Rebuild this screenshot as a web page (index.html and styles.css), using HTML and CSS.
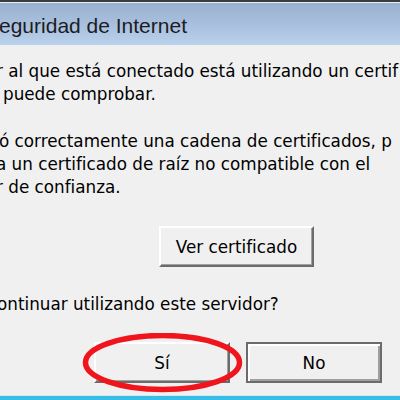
FILE: index.html
```html
<!DOCTYPE html>
<html lang="es">
<head>
<meta charset="utf-8">
<title>Seguridad de Internet</title>
<link rel="stylesheet" href="styles.css">
</head>
<body>
<div class="dialog">
  <div class="titlebar"><span class="title">eguridad de Internet</span></div>
  <div class="content">
    <div class="para">
      <div class="line l1">r al que está conectado está utilizando un certif</div>
      <div class="line l2">puede comprobar.</div>
    </div>
    <div class="para">
      <div class="line l3">ó correctamente una cadena de certificados, p</div>
      <div class="line l4">a un certificado de raíz no compatible con el</div>
      <div class="line l5">r de confianza.</div>
    </div>
    <div class="btn-center"><button class="btn btn-view">Ver certificado</button></div>
    <div class="line question">ontinuar utilizando este servidor?</div>
    <div class="actions">
      <button class="btn btn-yes">Sí</button>
      <button class="btn btn-no btn-default">No</button>
      <svg class="circle" width="170" height="70" viewBox="0 0 170 70" aria-hidden="true">
        <ellipse cx="81.5" cy="29.5" rx="77" ry="27" fill="none" stroke="#f0141c" stroke-width="5.5"/>
      </svg>
    </div>
  </div>
  <div class="taskbar"></div>
</div>
</body>
</html>
```
FILE: styles.css
```css
html, body {
  margin: 0;
  padding: 0;
}
body {
  width: 400px;
  height: 400px;
  overflow: hidden;
  background: #f0f0f0;
}
.dialog {
  width: 400px;
  height: 400px;
  display: flex;
  flex-direction: column;
  overflow: hidden;
  font-family: "DejaVu Sans", sans-serif;
  color: #000;
}
.titlebar {
  box-sizing: border-box;
  height: 45px;
  border-top: 2px solid #3c3c3c;
  box-shadow: inset 0 1px 0 #e8eef5;
  background: linear-gradient(to bottom, #98b1cf 0%, #a9c1de 55%, #b9d1eb 100%);
  display: flex;
  align-items: flex-start;
  flex-shrink: 0;
}
.title {
  font-family: "Liberation Sans", Arial, sans-serif;
  font-size: 21px;
  line-height: 30px;
  margin-top: 9px;
  margin-left: -1px;
  color: #1c1c22;
  white-space: nowrap;
}
.content {
  flex: 1;
  background: #f0f0f0;
  padding-top: 15px;
  display: flex;
  flex-direction: column;
}
.para + .para {
  margin-top: 24px;
}
.line {
  font-size: 16.8px;
  line-height: 23px;
  white-space: nowrap;
}
.l1 { margin-left: -4px; }
.l2 { margin-left: 3px; }
.l3 { margin-left: -1px; }
.l4 { margin-left: -4px; }
.l5 { margin-left: -4px; }
.btn-center {
  margin-top: 27px;
  padding-left: 159px;
  display: flex;
}
.btn {
  box-sizing: border-box;
  height: 41px;
  background: #f0f0f0;
  font-family: "DejaVu Sans", sans-serif;
  font-size: 16.8px;
  color: #000;
  border: 2px solid;
  border-color: #ffffff #6b6b6b #6b6b6b #ffffff;
  box-shadow: inset -1px -1px 0 #a0a0a0;
  padding: 0;
}
.btn-view {
  width: 155px;
}
.question {
  margin-top: 26px;
  margin-left: -3px;
}
.actions {
  margin-top: 26px;
  padding-left: 94px;
  display: flex;
  gap: 16px;
  position: relative;
}
.btn-yes, .btn-no {
  width: 136px;
}
.btn-default {
  border-color: #6b6b6b;
  box-shadow: inset 2px 2px 0 #ffffff, inset -2px -2px 0 #a0a0a0;
}
.circle {
  position: absolute;
  left: 81px;
  top: -9px;
}
.taskbar {
  height: 4px;
  border-top: 1px solid #cdeaf6;
  background: #38bde7;
  flex-shrink: 0;
}
```
